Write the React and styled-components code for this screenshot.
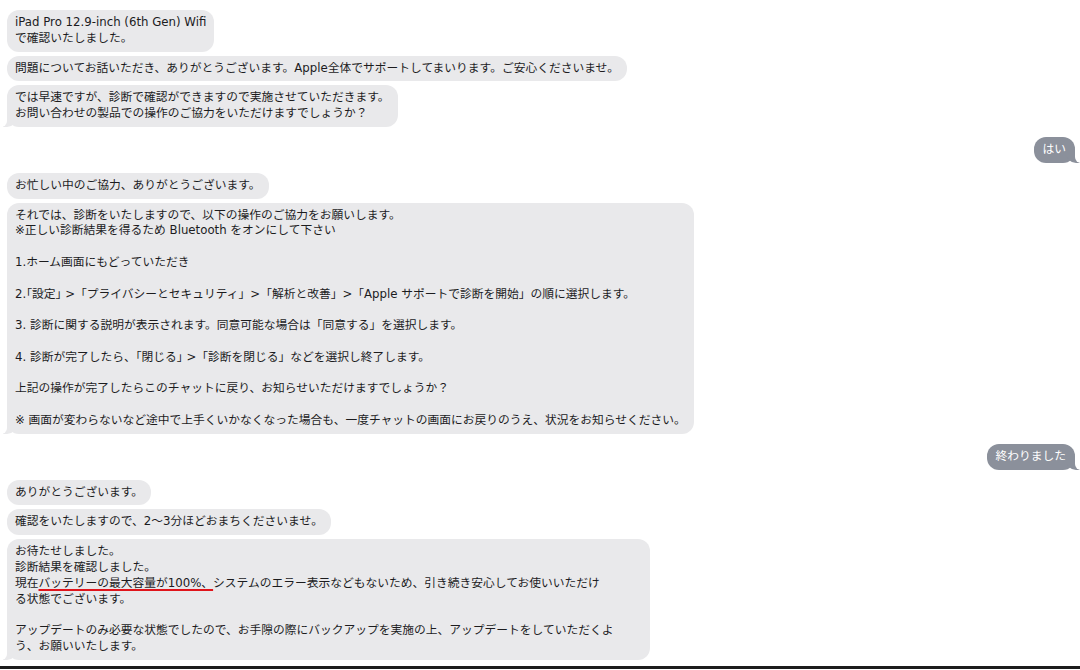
import React from "react"
import styled, { createGlobalStyle } from "styled-components"

const GlobalStyle = createGlobalStyle`
  html, body {
    margin: 0;
    padding: 0;
    background: #fff;
  }
  body {
    font-family: "DejaVu Sans", "Noto Sans CJK JP", sans-serif;
    -webkit-font-smoothing: antialiased;
  }
`

const messages = [
  { side: "left", lines: ["iPad Pro 12.9-inch (6th Gen) Wifi", "で確認いたしました。"] },
  { side: "left", lines: ["問題についてお話いただき、ありがとうございます。Apple全体でサポートしてまいります。ご安心くださいませ。"] },
  {
    side: "left",
    lines: [
      "では早速ですが、診断で確認ができますので実施させていただきます。",
      "お問い合わせの製品での操作のご協力をいただけますでしょうか？",
    ],
  },
  { side: "right", lines: ["はい"] },
  { side: "left", lines: ["お忙しい中のご協力、ありがとうございます。"] },
  {
    side: "left",
    lines: [
      "それでは、診断をいたしますので、以下の操作のご協力をお願いします。",
      "※正しい診断結果を得るため Bluetooth をオンにして下さい",
      "",
      "1.ホーム画面にもどっていただき",
      "",
      "2.｢設定｣ >「プライバシーとセキュリティ」>「解析と改善」>「Apple サポートで診断を開始」の順に選択します。",
      "",
      "3. 診断に関する説明が表示されます。同意可能な場合は「同意する」を選択します。",
      "",
      "4. 診断が完了したら、｢閉じる｣ >「診断を閉じる」などを選択し終了します。",
      "",
      "上記の操作が完了したらこのチャットに戻り、お知らせいただけますでしょうか？",
      "",
      "※ 画面が変わらないなど途中で上手くいかなくなった場合も、一度チャットの画面にお戻りのうえ、状況をお知らせください。",
    ],
  },
  { side: "right", lines: ["終わりました"] },
  { side: "left", lines: ["ありがとうございます。"] },
  { side: "left", lines: ["確認をいたしますので、2〜3分ほどおまちくださいませ。"] },
  {
    side: "left",
    width: 643,
    lines: [
      "お待たせしました。",
      "診断結果を確認しました。",
      "MARKED",
      "る状態でございます。",
      "",
      "アップデートのみ必要な状態でしたので、お手隙の際にバックアップを実施の上、アップデートをしていただくよ",
      "う、お願いいたします。",
    ],
  },
]

const Page = styled.div`
  width: 1080px;
  height: 670px;
  overflow: hidden;
  display: flex;
  flex-direction: column;
  box-sizing: border-box;
  padding: 10px 5px 0 7px;
`

const Thread = styled.div`
  display: flex;
  flex-direction: column;
  flex: 1;
`

const Row = styled.div`
  display: flex;
  justify-content: ${p => (p.$side === "right" ? "flex-end" : "flex-start")};
  margin-top: ${p => p.$gap}px;
`

const Bubble = styled.div`
  position: relative;
  box-sizing: border-box;
  width: ${p => (p.$width ? `${p.$width}px` : "auto")};
  padding: 5px ${p => (p.$side === "right" ? "9px" : "8px")};
  border-radius: 12px;
  font-size: 11.75px;
  line-height: 15.8px;
  white-space: nowrap;
  color: ${p => (p.$side === "right" ? "#fff" : "#1c1c1e")};
  background: ${p => (p.$side === "right" ? "#8b909b" : "#e9e9eb")};

  ${p =>
    p.$tail &&
    (p.$side === "right"
      ? `
    &::before {
      content: "";
      position: absolute;
      bottom: 0;
      right: -5px;
      width: 14px;
      height: 12px;
      background: #8b909b;
      border-bottom-left-radius: 10px;
      z-index: 0;
    }
    &::after {
      content: "";
      position: absolute;
      bottom: 0;
      right: -9px;
      width: 9px;
      height: 12px;
      background: #fff;
      border-bottom-left-radius: 6px;
      z-index: 1;
    }
  `
      : `
    &::before {
      content: "";
      position: absolute;
      bottom: 0;
      left: -4px;
      width: 14px;
      height: 12px;
      background: #e9e9eb;
      border-bottom-right-radius: 10px;
      z-index: 0;
    }
    &::after {
      content: "";
      position: absolute;
      bottom: 0;
      left: -8px;
      width: 8px;
      height: 12px;
      background: #fff;
      border-bottom-right-radius: 6px;
      z-index: 1;
    }
  `)}
`

const Line = styled.div`
  position: relative;
  z-index: 2;
  min-height: 15.8px;
`

const Marked = styled.span`
  text-decoration: underline;
  text-decoration-color: #e0141b;
  text-decoration-thickness: 2px;
  text-underline-offset: 2px;
`

const BottomRule = styled.div`
  height: 3px;
  margin: 0 -5px 1px -7px;
  background: #1c1c1c;
`

const renderLine = (text, i) => {
  if (text === "MARKED") {
    return (
      <Line key={i}>
        現在<Marked>バッテリーの最大容量が100%、</Marked>
        システムのエラー表示などもないため、引き続き安心してお使いいただけ
      </Line>
    )
  }
  return <Line key={i}>{text}</Line>
}

const App = () => (
  <>
    <GlobalStyle />
    <Page>
      <Thread>
        {messages.map((m, i) => {
          const prev = messages[i - 1]
          const next = messages[i + 1]
          const gap = i === 0 ? 0 : prev.side === m.side ? 4 : 10
          const tail = !next || next.side !== m.side
          return (
            <Row key={i} $side={m.side} $gap={gap}>
              <Bubble $side={m.side} $tail={tail} $width={m.width}>
                {m.lines.map(renderLine)}
              </Bubble>
            </Row>
          )
        })}
      </Thread>
      <BottomRule />
    </Page>
  </>
)

export default App
